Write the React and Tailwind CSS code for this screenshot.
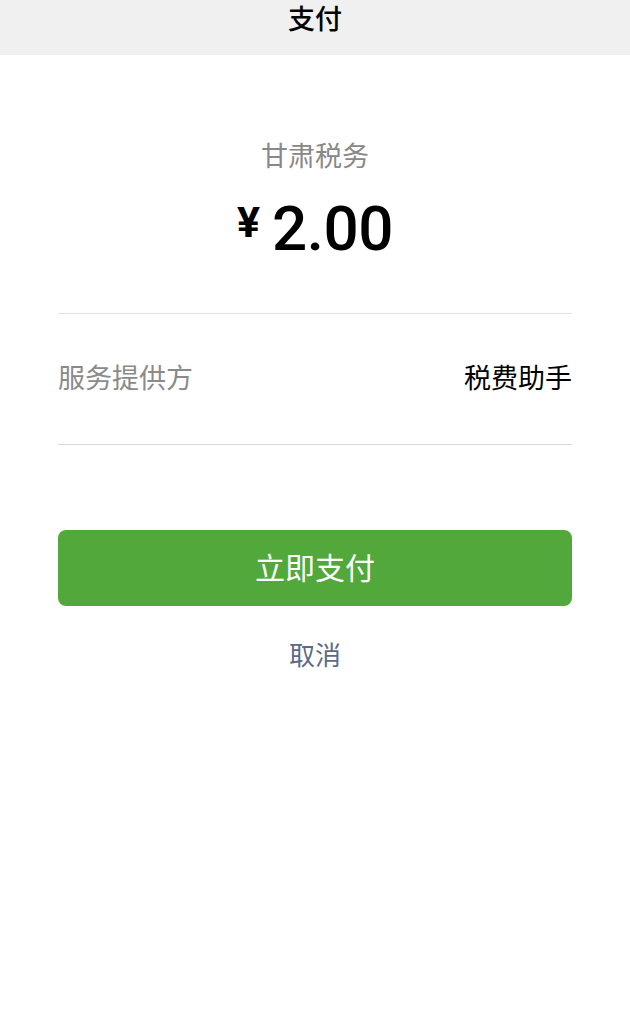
export default function App() {
  const cjk = { fontFamily: '"Noto Sans CJK SC", "Noto Sans", sans-serif' };
  return (
    <div className="w-[630px] min-h-[1018px] bg-white" style={cjk}>
      <div className="h-[55px] bg-[#f0f0f0] flex justify-center">
        <span className="text-[27px] leading-[36px] font-medium text-black">支付</span>
      </div>
      <div className="px-[58px]">
        <div className="pt-[80px] flex flex-col items-center">
          <div className="text-[27px] leading-[40px] text-[#888888]">甘肃税务</div>
          <div className="mt-[14px] flex items-start text-black" style={{ fontFamily: '"Roboto", "Noto Sans", sans-serif' }}>
            <span className="mt-[11px] text-[43px] leading-[44px] font-bold mr-[12px]">¥</span>
            <span className="text-[62px] leading-[80px] font-medium tracking-[-0.5px]">2.00</span>
          </div>
        </div>
        <div className="mt-[44px] border-t border-[#e2e2e2]" />
        <div className="h-[130px] pb-[4px] flex items-center justify-between">
          <span className="text-[27px] text-[#8a8a8a]">服务提供方</span>
          <span className="text-[27px] text-black">税费助手</span>
        </div>
        <div className="border-t border-[#d8d8d8]" />
        <button className="mt-[85px] w-full h-[76px] pb-[4px] rounded-[8px] bg-[#52a83a] text-white text-[30px]">立即支付</button>
        <div className="mt-[28px] flex justify-center">
          <span className="text-[26px] leading-[40px] text-[#5c6a88]">取消</span>
        </div>
      </div>
    </div>
  );
}
